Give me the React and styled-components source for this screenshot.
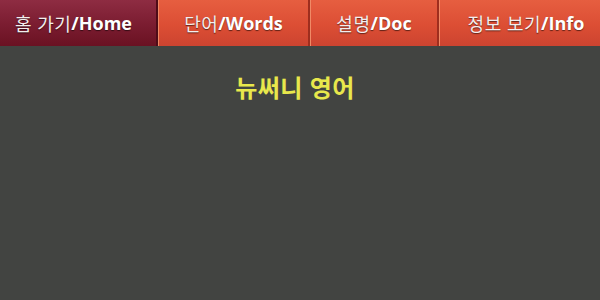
import React from 'react'
import styled, { createGlobalStyle } from 'styled-components'

const tabs = [
  { ko: '홈 가기', en: 'Home', width: 158, active: true },
  { ko: '단어', en: 'Words', width: 152 },
  { ko: '설명', en: 'Doc', width: 129 },
  { ko: '정보 보기', en: 'Info', width: 161 },
]

export default function App() {
  return (
    <>
      <GlobalStyle />
      <Screen>
        <TabBar>
          {tabs.map((t) => (
            <Tab key={t.en} $active={t.active} $width={t.width}>
              <Ko>{t.ko}</Ko>/{t.en}
            </Tab>
          ))}
        </TabBar>
        <Title>뉴써니 영어</Title>
      </Screen>
    </>
  )
}

const GlobalStyle = createGlobalStyle`
  html, body {
    margin: 0;
    padding: 0;
    background: #424441;
  }
`

const Screen = styled.div`
  width: 600px;
  height: 300px;
  background: #424441;
  font-family: "Open Sans", "Noto Sans CJK KR", sans-serif;
  overflow: hidden;
`

const TabBar = styled.div`
  display: flex;
  height: 46px;
  background: #3a2020;
`

const Tab = styled.div`
  flex: 0 0 ${(p) => p.$width}px;
  display: flex;
  align-items: center;
  justify-content: center;
  box-sizing: border-box;
  padding-bottom: 1px;
  border-left: 1px solid ${(p) => (p.$active ? '#9a4a58' : '#f08a66')};
  border-right: 2px solid ${(p) => (p.$active ? '#4e0c18' : '#9e2e1e')};
  background: ${(p) =>
    p.$active
      ? 'linear-gradient(#8e2c42, #7a1c30 55%, #6a1222)'
      : 'linear-gradient(#e65e40, #dc4e34 55%, #cc4430)'};
  color: #fff;
  font-size: 18px;
  font-weight: 700;
  text-shadow: 0 1px 1px rgba(0, 0, 0, 0.55);
  white-space: nowrap;

  &:first-child {
    border-left: none;
    padding-right: 9px;
  }
  &:last-child {
    border-right: none;
    padding-left: 12px;
  }
`

const Ko = styled.span`
  font-weight: 400;
  letter-spacing: 0.5px;
  color: #f4eeee;
`

const Title = styled.div`
  margin-top: 27px;
  padding-right: 10px;
  text-align: center;
  color: #e8e84c;
  font-size: 24px;
  font-weight: 700;
  line-height: 30px;
  letter-spacing: 0.5px;
`
